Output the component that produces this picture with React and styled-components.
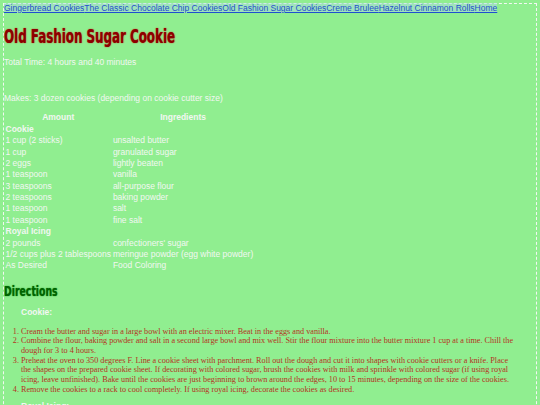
import styled, { createGlobalStyle } from "styled-components";

const GlobalStyle = createGlobalStyle`
  html {
    background: #90ee90;
  }
  body {
    margin: 0;
  }
`;

const App = () => (
  <>
    <GlobalStyle />
    <Page>
      <Nav>
        <NavLink href="#">Gingerbread Cookies</NavLink>
        <NavLink href="#">The Classic Chocolate Chip Cookies</NavLink>
        <NavLink href="#">Old Fashion Sugar Cookies</NavLink>
        <NavLink href="#">Creme Brulee</NavLink>
        <NavLink href="#">Hazelnut Cinnamon Rolls</NavLink>
        <NavLink href="#">Home</NavLink>
      </Nav>
      <Title>Old Fashion Sugar Cookie</Title>
      <Info>Total Time: 4 hours and 40 minutes</Info>
      <Info $spaced>Makes: 3 dozen cookies (depending on cookie cutter size)</Info>
      <Table>
        <thead>
          <tr>
            <Th>Amount</Th>
            <Th>Ingredients</Th>
          </tr>
        </thead>
        <tbody>
          <tr>
            <Group colSpan={2}>Cookie</Group>
          </tr>
          <Row amount="1 cup (2 sticks)" item="unsalted butter" />
          <Row amount="1 cup" item="granulated sugar" />
          <Row amount="2 eggs" item="lightly beaten" />
          <Row amount="1 teaspoon" item="vanilla" />
          <Row amount="3 teaspoons" item="all-purpose flour" />
          <Row amount="2 teaspoons" item="baking powder" />
          <Row amount="1 teaspoon" item="salt" />
          <Row amount="1 teaspoon" item="fine salt" />
          <tr>
            <Group colSpan={2}>Royal Icing</Group>
          </tr>
          <Row amount="2 pounds" item="confectioners' sugar" />
          <Row amount="1/2 cups plus 2 tablespoons" item="meringue powder (egg white powder)" />
          <Row amount="As Desired" item="Food Coloring" />
        </tbody>
      </Table>
      <Heading>Directions</Heading>
      <SubHeading>Cookie:</SubHeading>
      <Steps>
        <li>Cream the butter and sugar in a large bowl with an electric mixer. Beat in the eggs and vanilla.</li>
        <li>
          Combine the flour, baking powder and salt in a second large bowl and mix well. Stir the flour mixture
          into the butter mixture 1 cup at a time. Chill the dough for 3 to 4 hours.
        </li>
        <li>
          Preheat the oven to 350 degrees F. Line a cookie sheet with parchment. Roll out the dough and cut it
          into shapes with cookie cutters or a knife. Place the shapes on the prepared cookie sheet. If decorating
          with colored sugar, brush the cookies with milk and sprinkle with colored sugar (if using royal icing,
          leave unfinished). Bake until the cookies are just beginning to brown around the edges, 10 to 15
          minutes, depending on the size of the cookies.
        </li>
        <li>Remove the cookies to a rack to cool completely. If using royal icing, decorate the cookies as desired.</li>
      </Steps>
      <SubHeading>Royal Icing:</SubHeading>
      <Steps>
        <li>Beat the confectioners' sugar, meringue powder and water until stiff peaks form.</li>
      </Steps>
    </Page>
  </>
);

const Row = ({ amount, item }) => (
  <tr>
    <Td>{amount}</Td>
    <Td>{item}</Td>
  </tr>
);

const Page = styled.div`
  margin: 3px;
  border: 1px dashed #f2f7f2;
  font-family: "Liberation Sans", Arial, sans-serif;
  font-size: 8.5px;
  color: #f2f7f2;
`;

const Nav = styled.nav`
  line-height: 9.2px;
  white-space: nowrap;
`;

const NavLink = styled.a`
  color: #1f4fcf;
  background: rgba(173, 216, 230, 0.5);
  text-decoration: underline;
`;

const Title = styled.h1`
  margin: 12.5px 0 12px;
  font-family: Impact, "DejaVu Sans Condensed", "DejaVu Sans", sans-serif;
  font-stretch: condensed;
  font-weight: bold;
  font-size: 20px;
  line-height: 20px;
  color: #8b0000;
  text-shadow: 0 0 1.5px #d01010;
  transform: scaleX(0.66);
  transform-origin: left center;
  white-space: nowrap;
`;

const Info = styled.p`
  margin: ${(p) => (p.$spaced ? "27px" : "8px")} 0 8px;
  line-height: 9.2px;
`;

const Table = styled.table`
  margin-top: 8.8px;
  border-spacing: 1px;
  font-size: 8.5px;
  line-height: 9.37px;
  color: #f2f7f2;
`;

const Th = styled.th`
  padding: 0.5px;
  font-weight: bold;
  text-align: center;
`;

const Group = styled.td`
  padding: 0.5px;
  font-weight: bold;
`;

const Td = styled.td`
  padding: 0.5px;
  white-space: nowrap;
`;

const Heading = styled.h2`
  margin: 11.5px 0 10.4px;
  font-family: Impact, "DejaVu Sans Condensed", "DejaVu Sans", sans-serif;
  font-stretch: condensed;
  font-weight: bold;
  font-size: 14px;
  line-height: 14px;
  color: #006400;
  text-shadow: 0 0 1.5px #108010;
  transform: scaleX(0.74);
  transform-origin: left center;
  white-space: nowrap;
`;

const SubHeading = styled.h4`
  margin: 0 0 9.3px;
  padding-left: 17px;
  font-size: 8.5px;
  line-height: 9.2px;
  font-weight: bold;
`;

const Steps = styled.ol`
  margin: 0 0 8px;
  padding: 0 20px 0 17px;
  font-family: "Liberation Serif", "Times New Roman", serif;
  font-size: 8.2px;
  line-height: 9.67px;
  color: #b5321f;
`;

export default App;
